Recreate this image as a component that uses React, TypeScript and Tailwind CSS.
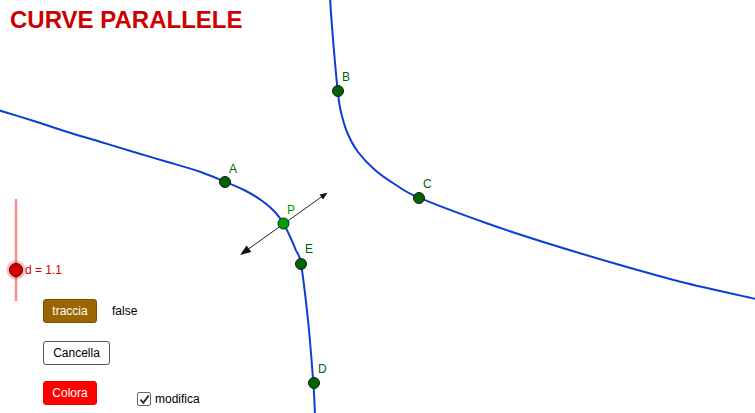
import React from "react";

type Pt = [number, number];

// smooth path through the sampled points (catmull-rom -> cubic bezier)
function smoothPath(pts: Pt[]) {
  let d = `M${pts[0][0]},${pts[0][1]}`;
  for (let i = 0; i < pts.length - 1; i++) {
    const p0 = pts[i - 1] ?? pts[i];
    const p1 = pts[i];
    const p2 = pts[i + 1];
    const p3 = pts[i + 2] ?? p2;
    const c1x = p1[0] + (p2[0] - p0[0]) / 6;
    const c1y = p1[1] + (p2[1] - p0[1]) / 6;
    const c2x = p2[0] - (p3[0] - p1[0]) / 6;
    const c2y = p2[1] - (p3[1] - p1[1]) / 6;
    d += ` C${c1x.toFixed(1)},${c1y.toFixed(1)} ${c2x.toFixed(1)},${c2y.toFixed(1)} ${p2[0]},${p2[1]}`;
  }
  return d;
}

const RIGHT_CURVE: Pt[] = [
  [330, -2], [331.5, 20], [333.5, 45], [337.7, 90.7], [340.5, 110], [347, 132],
  [358, 152], [375, 170], [396, 185], [419, 197.7], [486.7, 223.3], [553, 245],
  [620, 265], [686.7, 283.3], [756, 299],
];

const LEFT_CURVE: Pt[] = [
  [-2, 110], [33, 120.7], [66.7, 131.7], [100, 141.7], [133, 151.7], [166.7, 161.7],
  [200, 171.7], [225, 181.7], [246, 191], [263, 201.5], [275, 212], [283.3, 223.3],
  [290, 236.5], [296, 250.5], [301, 264], [308, 320], [313.3, 382.7], [315, 415],
];

const POINTS = [
  { name: "A", x: 225, y: 182, lx: 229, ly: 173 },
  { name: "B", x: 338, y: 91, lx: 342, ly: 81 },
  { name: "C", x: 419, y: 198, lx: 423, ly: 188 },
  { name: "E", x: 301, y: 264, lx: 305, ly: 253 },
  { name: "D", x: 314, y: 383, lx: 318, ly: 373 },
];

const FONT = { fontFamily: '"Liberation Sans", Arial, sans-serif' };

export default function App() {
  return (
    <div className="relative w-[755px] h-[413px] bg-white overflow-hidden" style={FONT}>
      <svg className="absolute inset-0" width={755} height={413} viewBox="0 0 755 413">
        <path d={smoothPath(RIGHT_CURVE)} fill="none" stroke="#0a3fd6" strokeWidth={2} />
        <path d={smoothPath(LEFT_CURVE)} fill="none" stroke="#0a3fd6" strokeWidth={2} />

        {/* vector through P */}
        <line x1={247} y1={250} x2={322} y2={196.5} stroke="#222" strokeWidth={1} />
        <polygon points="240,255 251.3,251.9 246.6,245.4" fill="#111" />
        <polygon points="327.5,192.7 323,199.5 319.6,194.6" fill="#111" />

        {/* slider d */}
        <line x1={16} y1={199} x2={16} y2={301} stroke="#f29191" strokeWidth={2.5} />
        <circle cx={16} cy={270} r={9.5} fill="#ff0000" fillOpacity={0.28} />
        <circle cx={16} cy={270} r={6.5} fill="#d40000" stroke="#330000" strokeWidth={1} />
        <text x={25} y={274} fontSize={12} fill="#d40000">d = 1.1</text>

        {POINTS.map((p) => (
          <g key={p.name}>
            <circle cx={p.x} cy={p.y} r={5.5} fill="#006400" stroke="#1a1a1a" strokeWidth={1} />
            <text x={p.lx} y={p.ly} fontSize={12} fill="#006400">{p.name}</text>
          </g>
        ))}
        <circle cx={283.5} cy={223.5} r={5.5} fill="#00a000" stroke="#1a1a1a" strokeWidth={1} />
        <text x={287} y={214} fontSize={12} fill="#009900">P</text>
      </svg>

      <div className="absolute left-[10px] top-[8px] text-[24px] font-bold text-[#cc0000] leading-none">
        CURVE PARALLELE
      </div>

      <div className="absolute left-[43px] top-[299px] flex items-center gap-[15px]">
        <button className="w-[54px] h-[24px] rounded-[3px] bg-[#996600] border border-[#7a5200] text-white text-[12px]">
          traccia
        </button>
        <span className="text-[12px] text-black">false</span>
      </div>

      <button className="absolute left-[43px] top-[341px] w-[67px] h-[24px] rounded-[3px] bg-white border border-[#555] text-black text-[12px]">
        Cancella
      </button>

      <button className="absolute left-[43px] top-[381px] w-[54px] h-[24px] rounded-[3px] bg-[#ff0000] border border-[#e00000] text-white text-[12px]">
        Colora
      </button>

      <label className="absolute left-[137px] top-[390px] flex items-center gap-[4px] text-[12px] text-black">
        <span className="w-[14px] h-[14px] rounded-[2px] border border-[#666] bg-white flex items-center justify-center">
          <svg width="11" height="11" viewBox="0 0 11 11">
            <path d="M1.5 5.5 L4.3 8.8 L9.7 1.5" fill="none" stroke="#222" strokeWidth={1.8} />
          </svg>
        </span>
        modifica
      </label>
    </div>
  );
}
